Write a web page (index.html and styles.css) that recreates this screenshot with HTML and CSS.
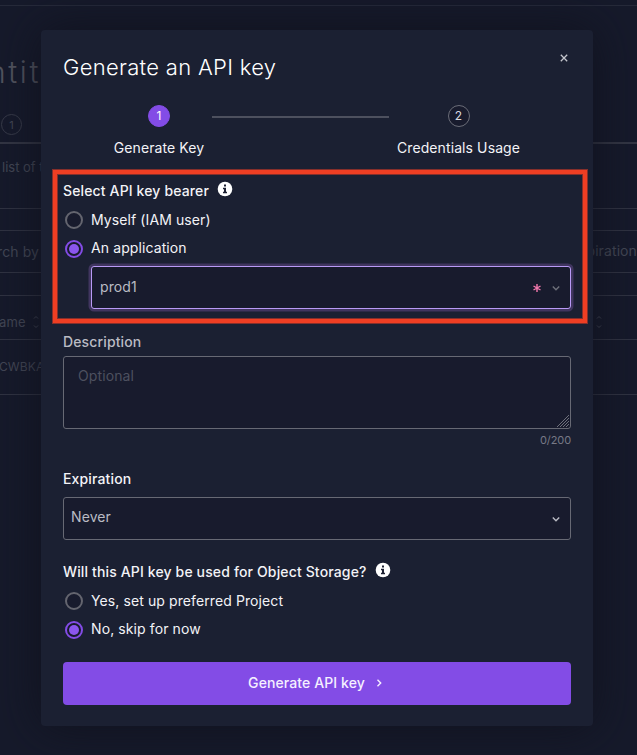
FILE: index.html
```
<!DOCTYPE html>
<html lang="en">
<head>
<meta charset="utf-8">
<title>Generate an API key</title>
<link rel="stylesheet" href="styles.css">
</head>
<body>
<div class="page">
  <div class="topbar"></div>
  <div class="page-title">ntit</div>
  <div class="tabs"><span class="tab-count">1</span></div>
  <div class="intro">list of t</div>
  <div class="gap"></div>
  <div class="filters"><span class="search">rch by</span><span class="exp">piration</span></div>
  <div class="gap small"></div>
  <div class="thead"><span class="name">ame</span>
    <svg class="sort first" viewBox="0 0 6 14"><path d="M1 3.5 3 1.5l2 2M1 10.5l2 2 2-2"/></svg>
    <svg class="sort last" viewBox="0 0 6 14"><path d="M1 3.5 3 1.5l2 2M1 10.5l2 2 2-2"/></svg>
  </div>
  <div class="trow">CWBKA</div>
</div>

<main class="modal">
  <header class="modal-head">
    <h1>Generate an API key</h1>
    <button class="close" aria-label="Close"><svg viewBox="0 0 8 8"><path d="M.8.8l6.4 6.4M7.2.8.8 7.2"/></svg></button>
  </header>

  <div class="stepper">
    <div class="step active"><span class="dot">1</span><span class="step-label">Generate Key</span></div>
    <div class="step-line"></div>
    <div class="step"><span class="dot">2</span><span class="step-label">Credentials Usage</span></div>
  </div>

  <section class="bearer">
    <div class="label"><span>Select API key bearer</span>
      <svg class="info" viewBox="0 0 16 16"><circle cx="8" cy="8" r="7.3"/><path d="M7 3.5h2v2H7zM6 6.8h3v4h1v1.5H6v-1.5h1V8.2H6z"/></svg></div>
    <div class="radio"><span class="ring"></span><span>Myself (IAM user)</span></div>
    <div class="radio on"><span class="ring"></span><span>An application</span></div>
    <div class="select focused"><span class="value">prod1</span>
      <svg class="star" viewBox="0 0 8 8"><path d="M4 0v8M.5 2l7 4M.5 6l7-4"/></svg>
      <svg class="chevron" viewBox="0 0 8 8"><path d="M.8 2.5 4 5.7l3.2-3.2"/></svg></div>
  </section>

  <div class="label desc">Description</div>
  <div class="textarea">Optional
    <svg class="grip" viewBox="0 0 14 14"><path d="M1 13 13 1M4 13l9-9M7 13l6-6M10 13l3-3"/></svg></div>
  <div class="counter">0/200</div>

  <div class="label expiration">Expiration</div>
  <div class="select never"><span class="value">Never</span>
    <svg class="chevron" viewBox="0 0 8 8"><path d="M.8 2.5 4 5.7l3.2-3.2"/></svg></div>

  <section class="storage">
    <div class="label"><span>Will this API key be used for Object Storage?</span>
      <svg class="info" viewBox="0 0 16 16"><circle cx="8" cy="8" r="7.3"/><path d="M7 3.5h2v2H7zM6 6.8h3v4h1v1.5H6v-1.5h1V8.2H6z"/></svg></div>
    <div class="radio"><span class="ring"></span><span>Yes, set up preferred Project</span></div>
    <div class="radio on"><span class="ring"></span><span>No, skip for now</span></div>
  </section>

  <button class="submit"><span>Generate API key</span><svg viewBox="0 0 8 8"><path d="M2.5 .8l3.2 3.2-3.2 3.2"/></svg></button>
</main>
</body>
</html>
```
FILE: styles.css
```
* { box-sizing: border-box; }
body {
  margin: 0;
  width: 637px;
  height: 755px;
  overflow: hidden;
  position: relative;
  background: #161a2b;
  color: #f3f3f7;
  font: 14px/20px Inter, sans-serif;
  letter-spacing: .1px;
}
svg { fill: none; stroke: currentColor; flex: none; display: block; }
button { font: inherit; letter-spacing: inherit; color: inherit; border: 0; padding: 0; background: none; }

/* page behind the dialog */
.page { height: 755px; color: #434755; white-space: nowrap; }
.topbar { height: 6px; border-bottom: 1px solid #262a3a; }
.page-title { height: 105px; padding-top: 49px; margin-left: -12px; font-size: 30px; line-height: 34px; font-weight: 300; letter-spacing: 2.6px; color: #52545f; }
.tabs { height: 33px; padding-top: 3px; border-bottom: 2px solid #333644; }
.tab-count { display: block; width: 21px; height: 21px; margin-left: 1px; border: 1px solid #383b49; border-radius: 50%; text-align: center; font-size: 11px; line-height: 20px; }
.intro { height: 65px; padding: 13px 0 0 2px; font-size: 13px; letter-spacing: 0; border-bottom: 1px solid #303342; }
.gap { height: 22px; border-bottom: 1px solid #303342; }
.filters { height: 42px; padding-top: 11px; display: flex; border-bottom: 1px solid #303342; }
.filters .search { width: 589px; margin-left: -3px; }
.filters .exp { margin-left: 1px; margin-top: -1px; }
.gap.small { height: 23px; }
.thead { height: 44px; display: flex; align-items: center; padding-top: 9px; border-bottom: 1px solid #303342; font-size: 13px; }
.thead .name { width: 33px; margin-left: -1px; }
.sort { width: 6px; height: 14px; stroke-width: 1; }
.sort.first { margin-left: 1px; margin-right: 557px; }
.trow { height: 55px; padding-top: 17px; margin-left: -1px; font-size: 12px; border-bottom: 1px solid #303342; }

/* dialog */
.modal {
  position: absolute;
  left: 41px;
  top: 30px;
  width: 552px;
  height: 696px;
  padding: 22px;
  border-radius: 4px;
  background: #1b2032;
  box-shadow: 0 0 46px rgba(15, 17, 27, .85);
}
.modal-head { height: 30px; display: flex; justify-content: space-between; }
h1 { margin: 0; font-size: 22px; line-height: 30px; font-weight: 300; letter-spacing: .3px; color: #fff; }
.close { height: 8px; margin: 2px 3px 0 0; color: #c5c6cd; }
.close svg { width: 8px; height: 8px; stroke-width: 1.3; }

.stepper { display: flex; margin-top: 23px; height: 53px; }
.step { display: flex; flex-direction: column; align-items: center; gap: 11px; }
.step:first-child { width: 192px; margin-right: -43px; }
.step:last-child { width: 139px; }
.dot { width: 22px; height: 22px; border-radius: 50%; border: 1px solid #6b6d78; background: #181b2d; text-align: center; font-size: 12px; line-height: 20px; letter-spacing: 0; color: #d9dae0; }
.active .dot { background: #834ce6; border-color: #834ce6; color: #fff; }
.step-line { width: 177px; height: 2px; margin-top: 11px; background: #4d505e; }

.label { display: flex; gap: 8px; height: 20px; font-weight: 500; letter-spacing: .14px; }
.info { width: 16px; height: 16px; }
.info circle { fill: #fff; stroke: none; }
.info path { fill: #1c2032; stroke: none; }

.bearer { position: relative; margin-top: 23px; }
/* red frame drawn over the dialog around the bearer choice */
.bearer::after { content: ""; position: absolute; left: -10px; right: -16px; top: -11px; bottom: -14px; border: 4px solid #ef3e23; outline: 1px solid rgba(239, 62, 35, .5); box-shadow: inset 0 0 0 1px rgba(239, 62, 35, .5); pointer-events: none; }

.radio { display: flex; align-items: center; gap: 8.5px; height: 20px; margin-top: 9px; padding-left: 1.5px; }
.radio + .radio { margin-top: 8px; }
.ring { width: 18px; height: 18px; border: 2px solid #64656f; border-radius: 50%; background: #181b2d; display: grid; place-items: center; }
.on .ring { border-color: #834ce6; margin-top: 1px; }
.on .ring::after { content: ""; width: 10px; height: 10px; border-radius: 50%; background: #8b56ee; }

.select { height: 43px; display: flex; align-items: center; padding: 0 10px 2px 7px; border: 1px solid #676974; border-radius: 3px; background: #181b2d; color: #babbc4; }
.select .value { flex: 1; }
.select.focused { margin: 8px 0 0 28px; padding-left: 8px; border-color: #b99af5; box-shadow: 0 0 0 2.5px #40355f; }
.never .value { margin-top: -1px; }
.chevron { width: 8px; height: 8px; stroke-width: 1.4; margin-top: 3px; }
.never .chevron { margin-top: 2px; }
.focused .chevron { color: #6e707a; }
.star { width: 8px; height: 8px; margin-right: 11px; margin-top: 2px; color: #f278ad; stroke-width: 1.4; }

.desc { margin-top: 23px; color: #babbc4; }
.textarea { position: relative; height: 73px; margin-top: 4px; padding: 9px 14px; border: 1px solid #676974; border-radius: 3px; background: #181b2d; color: #4d505f; }
.grip { position: absolute; right: 0; bottom: 0; width: 14px; height: 14px; color: #85868f; stroke-width: .8; }
.counter { height: 20px; margin-top: 1px; text-align: right; font-size: 11px; letter-spacing: -.1px; color: #777986; }
.expiration { margin-top: 19px; margin-bottom: 8px; }
.storage { margin-top: 22px; }
.submit { width: 508px; height: 43px; margin-top: 23px; padding: 0 3px 2px 0; border-radius: 4px; background: #834ce6; color: #f5f0ff; font-weight: 500; display: flex; align-items: center; justify-content: center; gap: 10px; }
.submit svg { width: 8px; height: 8px; stroke-width: 1.4; margin-top: 1px; }
```
